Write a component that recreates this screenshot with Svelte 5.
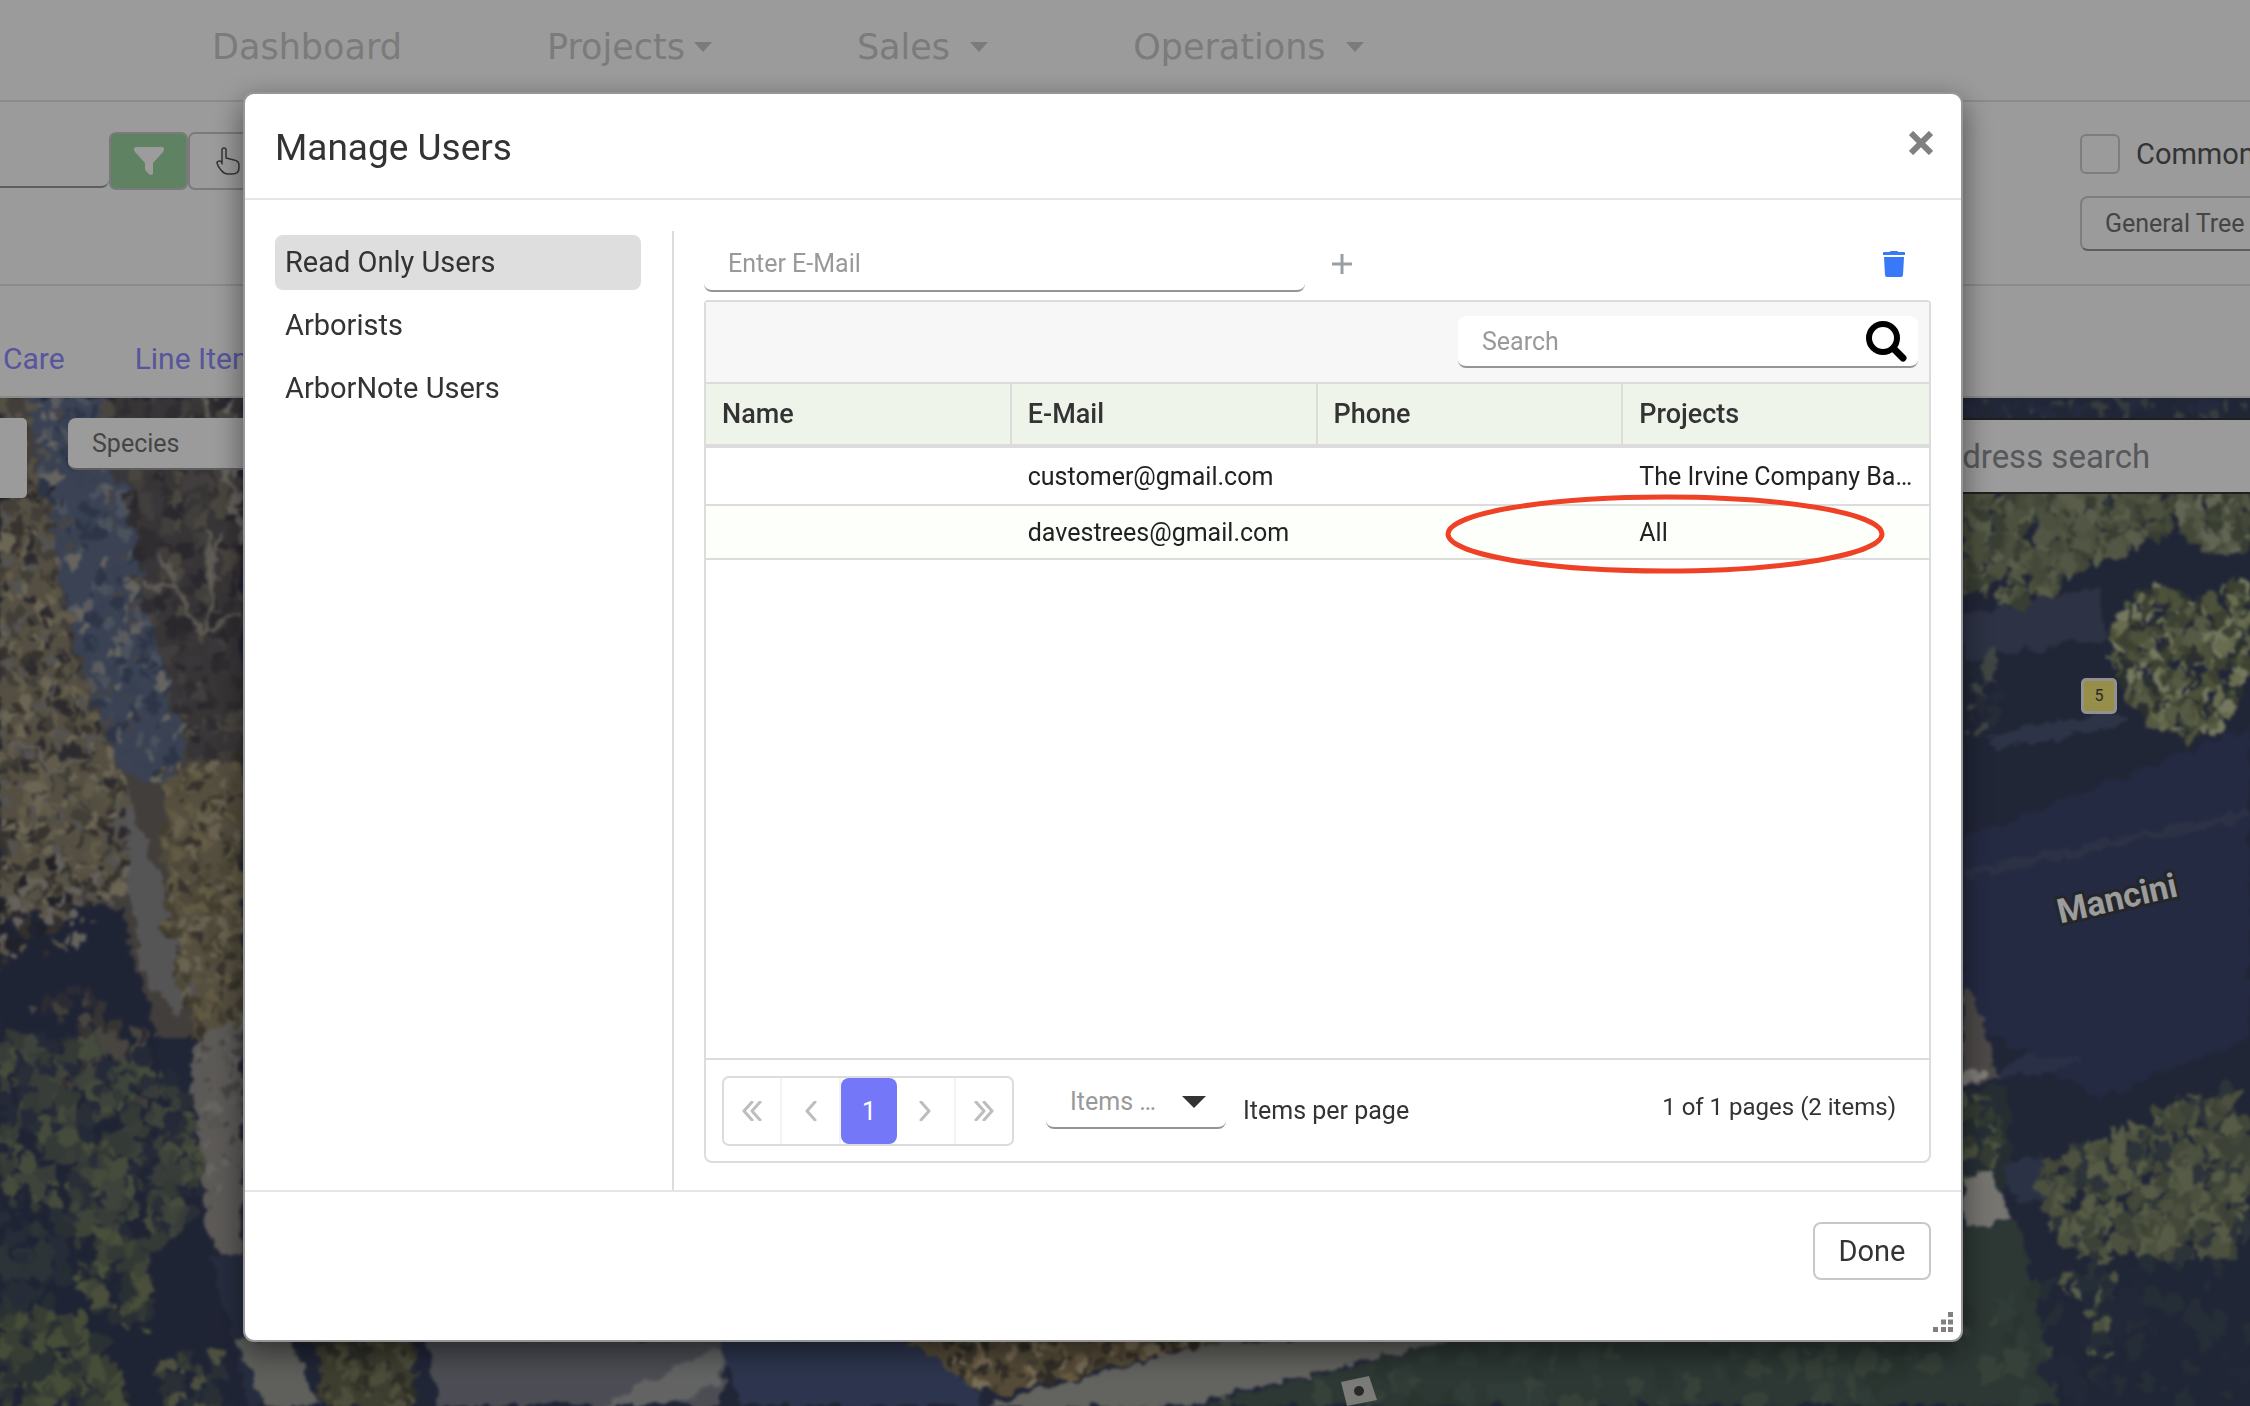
<script>
  const navItems = [
    { label: 'Dashboard', menu: false },
    { label: 'Projects', menu: true },
    { label: 'Sales\u00a0', menu: true },
    { label: 'Operations\u00a0', menu: true }
  ];
  const groups = ['Read Only Users', 'Arborists', 'ArborNote Users'];
  const columns = ['Name', 'E-Mail', 'Phone', 'Projects'];
  const users = [
    { name: '', email: 'customer@gmail.com', phone: '', projects: 'The Irvine Company Ba…' },
    { name: '', email: 'davestrees@gmail.com', phone: '', projects: 'All' }
  ];

  let activeGroup = $state('Read Only Users');
  let email = $state('');
  let search = $state('');

  // Ground patches of the aerial view, as [fill, points]
  const ground = [
    ['#6b6662', '0,0 243,0 243,640 0,640'],
    ['#8a816c', '0,90 45,100 60,220 90,300 120,400 130,480 0,500'],
    ['#5c575a', '105,0 243,0 243,350 190,360 140,200'],
    ['#5f6d8a', '28,0 105,0 125,70 150,210 185,350 165,390 120,370 75,240 45,110'],
    ['#a9a59d', '203,0 230,0 243,60 243,150 228,110'],
    ['#8b8168', '165,380 243,360 243,680 195,640 170,540'],
    ['#8d8b8c', '112,400 130,400 165,500 200,600 180,615 150,590 135,540 128,470'],
    ['#343b56', '0,520 60,510 125,510 135,560 158,640 165,680 200,780 215,860 235,960 290,1008 0,1008'],
    ['#97938f', '190,650 243,610 243,860 215,850 203,800'],
    ['#3f4a68', '212,860 260,850 300,1008 250,1008'],
    ['#9b9d96', '236,944 290,940 320,1008 265,1008'],
    ['#666650', '316,940 412,940 412,1008 322,1008'],
    ['#7d7f8a', '425,940 730,940 720,1008 440,1008'],
    ['#a2a3a4', '600,1008 700,955 725,950 720,985 670,1008'],
    ['#4a5880', '720,940 905,940 960,970 985,1008 740,1008'],
    ['#8b7b5c', '905,940 1235,940 1000,996 975,990'],
    ['#4a5b56', '1460,940 2022,840 2060,1008 1200,1008'],
    ['#a2a29c', '1235,940 1460,940 1180,1008 980,1008'],
    ['#3f4c52', '1963,690 2010,690 2012,780 1963,830'],
    ['#c1bfb8', '1963,780 1990,772 2013,822 1963,829'],
    ['#4a5b56', '1963,829 2018,824 2050,1008 1963,1008'],
    ['#4a5270', '1963,216 2100,190 2106,240 1963,262'],
    ['#4b5674', '1990,338 2110,312 2130,325 1995,352'],
    ['#3d456e', '1963,440 2250,330 2250,640 2100,700 1963,620'],
    ['#495173', '1963,473 2250,412 2250,420 1963,482'],
    ['#455074', '2006,664 2068,656 2085,665 2000,680'],
    ['#485373', '2000,768 2045,760 2050,800 2020,805'],
    ['#7d7876', '1963,590 1975,600 1985,630 2001,680 1980,684 1963,686'],
    ['#d0cdc6', '1963,676 1986,672 1986,680 1963,686']
  ];

  // Areas covered by leaves, rubble and bare branches
  const textures = [
    { area: [[0, 90], [45, 100], [75, 240], [130, 400], [128, 500], [0, 520]], n: 900, size: 6, fills: ['#5a544c', '#a0967a', '#4a464b', '#8e866f', '#b0a68a', '#6c675c', '#8a8886'] },
    { area: [[0, 0], [30, 0], [60, 120], [0, 110]], n: 80, size: 7, fills: ['#39353b', '#6d675c', '#8b8370'] },
    { area: [[28, 0], [105, 0], [150, 210], [185, 350], [165, 390], [120, 370], [75, 240], [45, 110]], n: 480, size: 7, fills: ['#4a5875', '#7c8799', '#95969a', '#5c6a86', '#a8a49c', '#4b5874', '#6f6f78'] },
    { area: [[105, 0], [243, 0], [243, 350], [190, 360], [140, 200]], n: 400, size: 8, fills: ['#4f4b50', '#6b6664', '#45424a', '#7a7368', '#5f5b5f'] },
    { area: [[160, 370], [243, 350], [243, 620], [190, 640], [165, 530]], n: 360, size: 6, fills: ['#a0936c', '#6f6650', '#80785f', '#aca084', '#5b5549'] },
    { area: [[0, 460], [128, 470], [80, 550], [0, 570]], n: 130, size: 6, fills: ['#35353f', '#8e8776', '#55504b', '#a59f97'] },
    { area: [[20, 600], [80, 590], [150, 640], [160, 720], [60, 700]], n: 110, size: 9, fills: ['#5a5754', '#6d6861', '#474854', '#77716a'] },
    { area: [[0, 640], [50, 640], [140, 650], [190, 700], [205, 800], [165, 850], [80, 830], [0, 800]], n: 460, size: 10, fills: ['#565f58', '#444d5a', '#667061', '#3d455c', '#737c62', '#5e655f'] },
    { area: [[60, 820], [150, 840], [150, 940], [80, 900]], n: 110, size: 9, fills: ['#545f58', '#78825f', '#444f55', '#66705b'] },
    { area: [[0, 910], [90, 920], [130, 1008], [0, 1008]], n: 170, size: 10, fills: ['#5c6655', '#727d5c', '#465154'] },
    { area: [[0, 800], [60, 850], [80, 910], [0, 910]], n: 60, size: 10, fills: ['#3d4a58', '#3f485c', '#4a555c'] },
    { area: [[160, 960], [215, 950], [230, 1008], [165, 1008]], n: 40, size: 8, fills: ['#5c645a', '#7e8368', '#434e58'] },
    { area: [[195, 650], [243, 620], [243, 790], [208, 800]], n: 80, size: 5, fills: ['#a8a5a0', '#75726f', '#8e8b88'] },
    { area: [[318, 940], [412, 940], [412, 1008], [322, 1008]], n: 110, size: 7, fills: ['#4b4c40', '#807f62', '#65644d'] },
    { area: [[915, 940], [1235, 940], [1010, 992], [975, 990]], n: 180, size: 6, fills: ['#4f483f', '#ad9668', '#c4b28c', '#69604f'] },
    { area: [[1500, 940], [2040, 880], [2060, 1008], [1200, 1008]], n: 200, size: 12, fills: ['#4f625a', '#46574f', '#596b5e'] },
    { area: [[1963, 88], [2180, 88], [2165, 140], [2120, 150], [2085, 165], [2060, 190], [2025, 203], [1963, 192]], n: 620, size: 8, fills: ['#868d6f', '#6f775c', '#92997a', '#5d6654', '#7c8466'] },
    { area: [[2170, 88], [2250, 88], [2250, 150], [2210, 155], [2175, 120]], n: 160, size: 8, fills: ['#868d6f', '#6f775c', '#a0a688', '#5d6654'] },
    { area: [[1963, 0], [2250, 0], [2250, 20], [1963, 20]], n: 90, size: 7, fills: ['#3c4566', '#5b6464', '#39405a'] },
    { area: [[2118, 215], [2145, 190], [2185, 200], [2215, 195], [2250, 180], [2250, 280], [2220, 330], [2190, 340], [2155, 330], [2120, 285], [2110, 250]], n: 680, size: 7, fills: ['#aab282', '#646b51', '#8c9470', '#464e4e', '#bfc59c', '#7d855f'] },
    { area: [[1963, 255], [1995, 260], [2000, 320], [1963, 340]], n: 45, size: 7, fills: ['#38435b', '#6b7370', '#404b5a'] },
    { area: [[2040, 775], [2075, 755], [2150, 720], [2220, 690], [2250, 700], [2250, 850], [2190, 860], [2140, 850], [2080, 860], [2050, 830]], n: 700, size: 9, fills: ['#7d8568', '#636d5a', '#8d9572', '#4a555d', '#6e765e'] },
    { area: [[2050, 870], [2110, 860], [2120, 900], [2090, 920]], n: 46, size: 8, fills: ['#848c6c', '#46535a', '#969c7f'] },
    { area: [[2095, 925], [2115, 930], [2110, 955], [2090, 950]], n: 20, size: 8, fills: ['#8b946e', '#7a8468'] },
    { area: [[2030, 860], [2250, 870], [2250, 1008], [2060, 1008]], n: 90, size: 12, fills: ['#343e58', '#3d4a59', '#38425a'] },
    { area: [[1963, 700], [1990, 700], [2010, 750], [1963, 780]], n: 70, size: 8, fills: ['#7d8767', '#566254', '#3f4b5a'] }
  ];

  const twigs = [
    'M203 240 L190 210 L176 190 L145 186',
    'M176 190 L168 170 L158 158',
    'M206 240 L212 190 L208 130',
    'M206 240 L222 222 L240 215',
    'M214 195 L213 160 L220 135',
    'M44 410 L50 375 L70 365 L88 355',
    'M50 375 L35 350 L12 345',
    'M203 0 L225 75 L243 140'
  ];

  function rng(seed) {
    return () => {
      seed = (seed * 1664525 + 1013904223) % 4294967296;
      return seed / 4294967296;
    };
  }

  function inside(x, y, poly) {
    let hit = false;
    for (let i = 0, j = poly.length - 1; i < poly.length; j = i++) {
      const [xi, yi] = poly[i];
      const [xj, yj] = poly[j];
      if (yi > y !== yj > y && x < ((xj - xi) * (y - yi)) / (yj - yi) + xi) hit = !hit;
    }
    return hit;
  }

  function scatter({ area, n, size, fills }, seed) {
    const rand = rng(seed);
    const xs = area.map((p) => p[0]);
    const ys = area.map((p) => p[1]);
    const x0 = Math.min(...xs), y0 = Math.min(...ys);
    const w = Math.max(...xs) - x0, h = Math.max(...ys) - y0;
    const shapes = [];
    for (let k = 0; k < n; k++) {
      const x = x0 + rand() * w;
      const y = y0 + rand() * h;
      const r = size * (0.4 + rand());
      const a = rand() * 6.28;
      const fill = fills[Math.floor(rand() * fills.length)];
      if (!inside(x, y, area)) continue;
      let d = '';
      for (let s = 0; s < 5; s++) {
        const t = a + (s * 6.28) / 5;
        const q = r * (0.5 + rand() * 0.6);
        d += `${s ? 'L' : 'M'}${(x + Math.cos(t) * q).toFixed(1)} ${(y + Math.sin(t) * q * 1.2).toFixed(1)}`;
      }
      shapes.push({ fill, d: d + 'Z' });
    }
    return shapes;
  }

  const leaves = textures.flatMap((t, i) => scatter(t, 71 + i * 937));
</script>

<div class="page">
  <nav class="navbar">
    {#each navItems as item}
      <a href="#{item.label.trim().toLowerCase()}">
        {item.label}
        {#if item.menu}
          <svg width="18" height="10" viewBox="0 0 18 10"><path d="M0 0h18l-9 10z" fill="currentColor" /></svg>
        {/if}
      </a>
    {/each}
  </nav>

  <div class="toolbar">
    <div class="tools">
      <input class="filter-input" type="text" aria-label="Filter" />
      <button class="tool filter" aria-label="Apply filter">
        <svg width="30" height="28" viewBox="0 0 30 28"><path d="M2 0h26q2 0 2 2 0 2-1 3L19 16v10q0 2-2 2-1 0-2-1l-3-3q-1-1-1-2v-6L1 5Q0 4 0 2 0 0 2 0z" fill="#fff" /></svg>
      </button>
      <button class="tool" aria-label="Select on map">
        <svg width="24" height="28" viewBox="0 0 24 28" fill="none" stroke="#555" stroke-width="1.5" stroke-linejoin="round">
          <path d="M6 17V3q0-2 2-2t2 2v8l8 2q5 1 5 5v3q0 6-7 6h-4q-4 0-7-4-3-3-4-7 0-2 3-2 1 0 2 2z" />
        </svg>
      </button>
    </div>
    <div class="options">
      <label class="check"><input type="checkbox" />Common</label>
      <button class="care">General Tree</button>
    </div>
  </div>

  <div class="tabs">
    <a href="#care">Care</a>
    <a href="#line-items">Line Items</a>
  </div>

  <div class="map">
    <svg class="aerial" viewBox="0 0 2250 1008" preserveAspectRatio="xMinYMin slice" aria-hidden="true">
      <defs>
        <filter id="rough" x="0" y="0" width="100%" height="100%" color-interpolation-filters="sRGB">
          <feTurbulence type="fractalNoise" baseFrequency="0.06" numOctaves="3" seed="4" result="noise" />
          <feDisplacementMap in="SourceGraphic" in2="noise" scale="18" xChannelSelector="R" yChannelSelector="G" result="bent" />
          <feGaussianBlur in="bent" stdDeviation="1.8" />
        </filter>
      </defs>
      <rect width="2250" height="1008" fill="#363e5a" />
      <g filter="url(#rough)">
        <rect width="2250" height="1008" fill="#363e5a" />
        {#each ground as [fill, points]}
          <polygon {points} {fill} />
        {/each}
        {#each leaves as leaf}
          <path d={leaf.d} fill={leaf.fill} />
        {/each}
        {#each twigs as d}
          <path {d} fill="none" stroke="#a8a296" stroke-width="4" opacity="0.8" />
        {/each}
      </g>
      <path d="M1341 984l28-6 8 24-30 6z" fill="#c9c9c3" />
      <circle cx="1359" cy="993" r="5" fill="#444" />
    </svg>

    <div class="map-block"></div>
    <button class="species">Species</button>
    <input class="address" type="text" placeholder="Address search" aria-label="Address search" />
    <span class="marker">5</span>
    <span class="street">Mancini</span>
  </div>
</div>

<div class="overlay">
  <div class="modal" role="dialog" aria-labelledby="modal-title">
    <header>
      <h1 id="modal-title">Manage Users</h1>
      <button class="icon-btn close" aria-label="Close">
        <svg width="24" height="24" viewBox="0 0 24 24" stroke="#808080" stroke-width="6"><path d="M2 2l20 20M22 2L2 22" /></svg>
      </button>
    </header>

    <div class="body">
      <div class="groups">
        {#each groups as group}
          <button class:active={group === activeGroup} onclick={() => (activeGroup = group)}>{group}</button>
        {/each}
      </div>

      <div class="content">
        <div class="add-row">
          <input class="field email" type="email" placeholder="Enter E-Mail" aria-label="Enter E-Mail" bind:value={email} />
          <button class="icon-btn add" aria-label="Add user">
            <svg width="22" height="22" viewBox="0 0 22 22" stroke="#9a9fa5" stroke-width="3"><path d="M11 1v20M1 11h20" /></svg>
          </button>
          <button class="icon-btn trash" aria-label="Delete user">
            <svg width="24" height="26" viewBox="0 0 24 26" fill="#3779f7">
              <path d="M8 1q0-1 1-1h6q1 0 1 1h6q1 0 1 1v2H1V2q0-1 1-1z" />
              <path d="M2 6h20l-1 18q0 2-2 2H5q-2 0-2-2z" />
            </svg>
          </button>
        </div>

        <div class="grid">
          <div class="grid-bar">
            <div class="search">
              <input class="field" type="text" placeholder="Search" aria-label="Search" bind:value={search} />
              <svg width="42" height="42" viewBox="0 0 42 42" fill="none" stroke="#000" stroke-linecap="round">
                <circle cx="18" cy="18" r="14" stroke-width="6" />
                <path d="M29 29l9 9" stroke-width="7" />
              </svg>
            </div>
          </div>

          <table>
            <thead>
              <tr>
                {#each columns as column}
                  <th scope="col">{column}</th>
                {/each}
              </tr>
            </thead>
            <tbody>
              {#each users as user}
                <tr>
                  <td>{user.name}</td>
                  <td>{user.email}</td>
                  <td>{user.phone}</td>
                  <td>{user.projects}</td>
                </tr>
              {/each}
            </tbody>
          </table>

          <svg class="highlight" width="440" height="80" viewBox="0 0 440 80">
            <ellipse cx="220" cy="40" rx="217" ry="37" fill="none" stroke="#ee4126" stroke-width="5" />
          </svg>

          <div class="pager">
            <div class="pages">
              <button aria-label="First page"><svg width="20" height="20" viewBox="0 0 20 20"><path d="M10 1l-8 9 8 9M18 1l-8 9 8 9" /></svg></button>
              <button aria-label="Previous page"><svg width="12" height="20" viewBox="0 0 12 20"><path d="M10 1l-8 9 8 9" /></svg></button>
              <button class="current">1</button>
              <button aria-label="Next page"><svg width="12" height="20" viewBox="0 0 12 20"><path d="M2 1l8 9-8 9" /></svg></button>
              <button aria-label="Last page"><svg width="20" height="20" viewBox="0 0 20 20"><path d="M2 1l8 9-8 9M10 1l8 9-8 9" /></svg></button>
            </div>
            <div class="size">
              <select class="field" id="page-size">
                <option>Items …</option>
              </select>
              <svg width="24" height="12" viewBox="0 0 24 12"><path d="M0 0h24L12 12z" fill="#333" /></svg>
            </div>
            <label for="page-size">Items per page</label>
            <span class="summary">1 of 1 pages (2 items)</span>
          </div>
        </div>
      </div>
    </div>

    <footer>
      <button class="done">Done</button>
    </footer>

    <svg class="resizer" width="20" height="20" viewBox="0 0 20 20" fill="#808080">
      <path d="M15 0h5v5h-5zM15 7.500h5v5h-5zM8 7.500h5v5H8zM15 15h5v5h-5zM8 15h5v5H8zM0 15h5v5H0z" />
    </svg>
  </div>
</div>

<style>
  :global(body) {
    overflow: hidden;
    font-family: Roboto, 'Noto Sans', sans-serif;
    font-size: 25px;
    color: #333;
  }

  * {
    box-sizing: border-box;
  }

  button,
  input,
  select {
    font: inherit;
    color: inherit;
    border: none;
    margin: 0;
    padding: 0;
    background: none;
  }

  svg {
    display: block;
    flex: none;
  }

  /* page behind the dialog */
  .page {
    height: 100vh;
    display: flex;
    flex-direction: column;
    background: #fefefe;
  }

  .navbar {
    height: 102px;
    padding: 0 212px 6px;
    display: flex;
    align-items: center;
    gap: 145px;
    border-bottom: 2px solid #e2e2e2;
    font-family: 'DejaVu Sans', sans-serif;
    font-size: 35px;
  }

  .navbar a {
    display: flex;
    align-items: center;
    gap: 9px;
    color: #c9c9c9;
    text-decoration: none;
    white-space: nowrap;
  }

  .toolbar {
    height: 184px;
    padding-top: 30px;
    display: flex;
    justify-content: space-between;
    border-bottom: 2px solid #e2e2e2;
  }

  .tools {
    display: flex;
  }

  .filter-input {
    width: 109px;
    height: 56px;
    border-bottom: 2px solid #999;
    border-radius: 0 0 8px 0;
  }

  .tool {
    width: 79px;
    height: 58px;
    border: 2px solid #c8c8c8;
    border-radius: 7px;
    display: flex;
    align-items: center;
    justify-content: center;
  }

  .tool.filter {
    background: #9cd5a1;
  }

  .options {
    width: 170px;
    display: flex;
    flex-direction: column;
    gap: 22px;
    padding-top: 2px;
    overflow: hidden;
    white-space: nowrap;
  }

  .check {
    height: 40px;
    display: flex;
    align-items: center;
    gap: 16px;
    font-size: 29px;
    color: #555;
  }

  .check input {
    appearance: none;
    flex: none;
    width: 40px;
    height: 40px;
    border: 2px solid #ccc;
    border-radius: 6px;
  }

  .care {
    width: 280px;
    height: 55px;
    padding-left: 23px;
    border: 2px solid #ccc;
    border-bottom-color: #999;
    border-radius: 8px;
    text-align: left;
    color: #717171;
  }

  .tabs {
    height: 112px;
    padding: 34px 3px 0;
    display: flex;
    align-items: center;
    gap: 70px;
    border-bottom: 2px solid #e2e2e2;
    font-size: 30px;
  }

  .tabs a {
    color: #8f8bff;
    text-decoration: none;
    white-space: nowrap;
  }

  .map {
    position: relative;
    flex: 1;
    overflow: hidden;
  }

  .aerial {
    width: 100%;
    height: 100%;
  }

  .map-block {
    position: absolute;
    top: 20px;
    left: 0;
    width: 27px;
    height: 80px;
    border-radius: 0 5px 5px 0;
    background: #fefefe;
  }

  .species {
    position: absolute;
    top: 20px;
    left: 68px;
    width: 300px;
    height: 52px;
    padding-left: 24px;
    border-bottom: 2px solid #999;
    border-radius: 8px;
    background: #fefefe;
    text-align: left;
    color: #717171;
  }

  .address {
    position: absolute;
    top: 20px;
    right: 0;
    width: 350px;
    height: 76px;
    padding-left: 22px;
    border: 2px solid #333;
    border-width: 2px 0;
    background: #fefefe;
    font-size: 33px;
  }

  .address::placeholder {
    color: #8d9096;
    opacity: 1;
  }

  .marker {
    position: absolute;
    top: 280px;
    right: 133px;
    width: 36px;
    height: 36px;
    border: 3px solid #eee;
    border-radius: 5px;
    background: #f5e878;
    font-size: 16px;
    line-height: 30px;
    text-align: center;
    color: #444;
  }

  .street {
    position: absolute;
    top: 480px;
    right: 72px;
    font-size: 34px;
    font-weight: 700;
    color: #fff;
    transform: rotate(-13deg);
    paint-order: stroke fill;
    -webkit-text-stroke: 6px #3b3f45;
  }

  /* dialog */
  .overlay {
    position: fixed;
    inset: 0;
    padding: 92px 287px 64px 243px;
    display: flex;
    background: rgba(0, 0, 0, 0.39);
  }

  .modal {
    position: relative;
    flex: 1;
    display: flex;
    flex-direction: column;
    border: 2px solid #969696;
    border-radius: 11px;
    background: #fff;
    box-shadow: 0 10px 30px rgba(0, 0, 0, 0.5);
  }

  header {
    height: 106px;
    padding: 2px 28px 0 30px;
    display: flex;
    align-items: center;
    justify-content: space-between;
    border-bottom: 2px solid #e5e5e5;
  }

  h1 {
    margin: 0;
    font-size: 37px;
    font-weight: 400;
  }

  .icon-btn {
    display: flex;
    align-items: center;
    justify-content: center;
    cursor: pointer;
  }

  .close {
    padding-bottom: 8px;
  }

  .body {
    flex: 1;
    min-height: 0;
    padding: 31px 30px 0;
    display: flex;
  }

  .groups {
    width: 399px;
    padding: 4px 31px 0 0;
    display: flex;
    flex-direction: column;
    gap: 8px;
    border-right: 2px solid #dcdcdc;
  }

  .groups button {
    height: 55px;
    padding: 0 10px 2px;
    border-radius: 8px;
    text-align: left;
    font-size: 29px;
    cursor: pointer;
  }

  .groups button.active {
    background: #dedede;
  }

  .content {
    flex: 1;
    min-width: 0;
    padding: 4px 0 27px 30px;
    display: flex;
    flex-direction: column;
    gap: 8px;
  }

  .add-row {
    display: flex;
    align-items: center;
  }

  .field {
    border-bottom: 2px solid #959595;
    border-radius: 8px;
    background: #fff;
    outline: none;
    padding: 0 24px;
  }

  .field::placeholder {
    color: #999;
    opacity: 1;
  }

  .email {
    width: 49%;
    height: 57px;
    padding-top: 2px;
  }

  .add {
    margin-left: 26px;
  }

  .trash {
    margin-left: auto;
    margin-right: 25px;
  }

  .grid {
    position: relative;
    flex: 1;
    display: flex;
    flex-direction: column;
    border: 2px solid #dcdcdc;
    border-radius: 4px 4px 8px 8px;
  }

  .grid-bar {
    height: 82px;
    padding: 14px 11px 0;
    display: flex;
    justify-content: flex-end;
    align-items: flex-start;
    border-bottom: 2px solid #dcdcdc;
    background: #f7f7f7;
  }

  .search {
    position: relative;
    width: 460px;
  }

  .search .field {
    width: 100%;
    height: 52px;
  }

  .search svg {
    position: absolute;
    top: 4px;
    right: 11px;
  }

  table {
    width: 100%;
    table-layout: fixed;
    border-collapse: separate;
    border-spacing: 0;
  }

  th {
    height: 64px;
    padding: 0 16px;
    border-right: 2px solid #dcdcdc;
    border-bottom: 4px solid #dcdcdc;
    background: #eff4ea;
    text-align: left;
    font-size: 27px;
    font-weight: 500;
  }

  th:last-child {
    border-right: none;
  }

  td {
    height: 58px;
    padding: 0 10px 0 16px;
    border-bottom: 2px solid #dcdcdc;
    color: #212121;
    white-space: nowrap;
    overflow: hidden;
    text-overflow: ellipsis;
  }

  tbody tr:nth-child(even) td {
    height: 54px;
    background: #fdfffa;
  }

  .highlight {
    position: absolute;
    top: 192px;
    right: 44px;
    pointer-events: none;
  }

  .pager {
    margin-top: auto;
    height: 103px;
    padding: 16px 33px 0 16px;
    display: flex;
    align-items: flex-start;
    border-top: 2px solid #dcdcdc;
  }

  .pages {
    width: 292px;
    height: 70px;
    display: flex;
    border: 2px solid #dcdcdc;
    border-radius: 7px;
  }

  .pages button {
    flex: 1;
    display: flex;
    align-items: center;
    justify-content: center;
    border-right: 2px solid #f3f3f3;
  }

  .pages button:last-child {
    border-right: none;
  }

  .pages .current {
    border-radius: 8px;
    border-right: none;
    background: #7477f8;
    color: #fff;
  }

  .pages svg {
    fill: none;
    stroke: #bdbdbd;
    stroke-width: 3;
    stroke-linejoin: round;
    stroke-linecap: round;
  }

  .size {
    position: relative;
    margin-left: 32px;
    width: 180px;
  }

  .size select {
    appearance: none;
    width: 100%;
    height: 53px;
    color: #999;
  }

  .size svg {
    position: absolute;
    top: 20px;
    right: 20px;
    pointer-events: none;
  }

  .pager label {
    margin-left: 17px;
    line-height: 70px;
  }

  .summary {
    margin-left: auto;
    font-size: 24px;
    line-height: 62px;
  }

  footer {
    height: 150px;
    padding: 30px;
    display: flex;
    justify-content: flex-end;
    align-items: flex-start;
    border-top: 2px solid #e5e5e5;
  }

  .done {
    width: 118px;
    height: 58px;
    border: 2px solid #c8c8c8;
    border-radius: 8px;
    font-size: 29px;
    cursor: pointer;
  }

  .resizer {
    position: absolute;
    right: 8px;
    bottom: 8px;
  }
</style>
